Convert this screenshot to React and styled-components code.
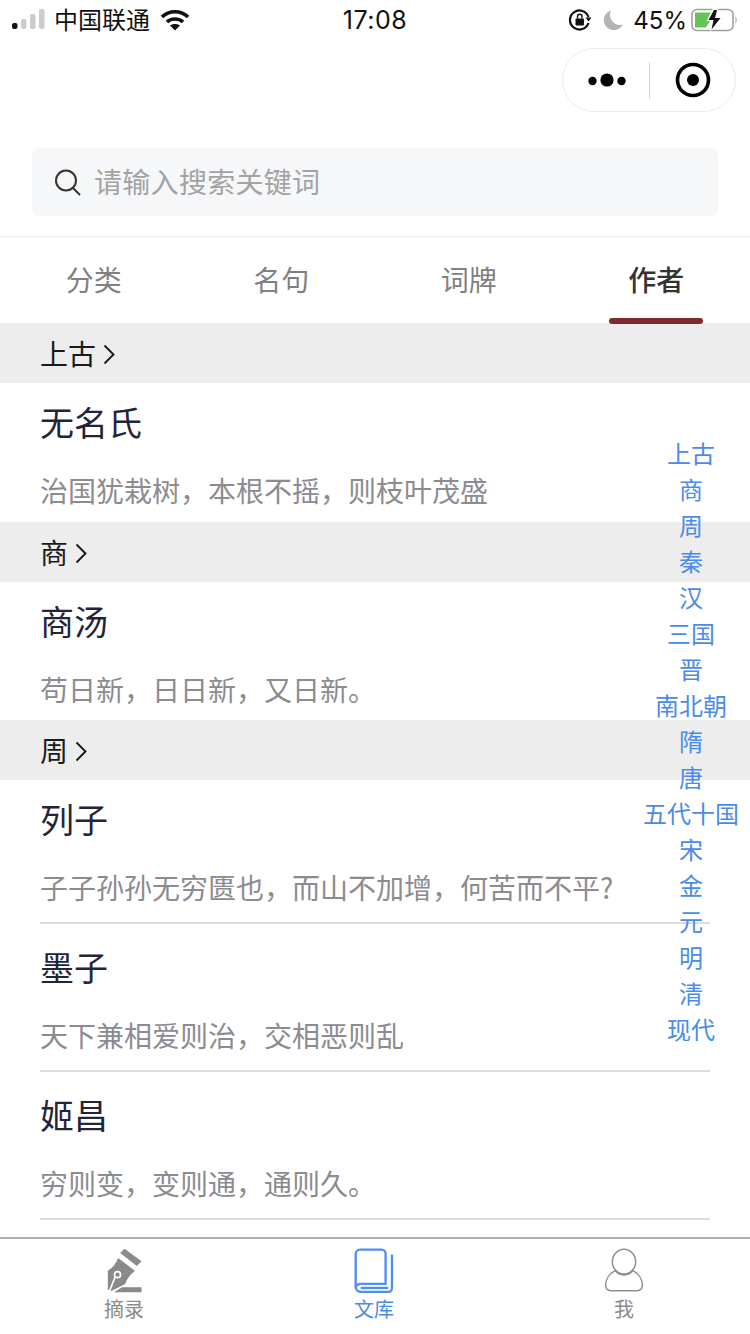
import React from "react";
import styled, { createGlobalStyle } from "styled-components";

const Global = createGlobalStyle`
  html, body { margin: 0; padding: 0; background: #fff; }
  body { font-family: "Inter", "Noto Sans CJK SC", sans-serif; }
  * { box-sizing: border-box; }
`;

const CJK = `"Noto Sans CJK SC", "Noto Sans", sans-serif`;

const Page = styled.div`
  position: relative;
  width: 750px;
  height: 1334px;
  display: flex;
  flex-direction: column;
  overflow: hidden;
  background: #fff;
  font-family: ${CJK};
`;

const StatusBar = styled.div`
  height: 40px;
  display: grid;
  grid-template-columns: 1fr auto 1fr;
  align-items: center;
  padding: 0 12px;
  color: #111;
  font-size: 24px;
`;
const StatusLeft = styled.div`
  display: flex;
  align-items: center;
`;
const Carrier = styled.span`
  margin-left: 9px;
  font-size: 24px;
  line-height: 38px;
  height: 40px;
`;
const WifiWrap = styled.span`
  display: flex;
  margin-left: 10px;
`;
const Clock = styled.div`
  font-family: "Inter", sans-serif;
  font-size: 25px;
  letter-spacing: 0.5px;
  line-height: 40px;
`;
const StatusRight = styled.div`
  display: flex;
  align-items: center;
  justify-content: flex-end;
`;
const Percent = styled.span`
  font-family: "Inter", sans-serif;
  font-size: 24px;
  margin: 0 4px 0 10px;
`;
const MoonWrap = styled.span`
  display: flex;
  margin-left: 11px;
`;

const NavRow = styled.div`
  height: 72px;
  padding: 8px 14px 0 0;
  display: flex;
  justify-content: flex-end;
`;
const Capsule = styled.div`
  width: 174px;
  height: 64px;
  border: 1px solid #ececec;
  border-radius: 32px;
  display: grid;
  grid-template-columns: 86px 1px 1fr;
  align-items: center;
  justify-items: center;
`;
const CapsuleRule = styled.div`
  width: 1px;
  height: 37px;
  background: #d8d8d8;
`;

const SearchWrap = styled.div`
  padding: 36px 32px 20px;
  border-bottom: 1px solid #ececec;
`;
const SearchBox = styled.div`
  height: 68px;
  border-radius: 6px;
  background: #f6f7f9;
  display: flex;
  align-items: center;
  padding-left: 22px;
  gap: 12px;
`;
const Placeholder = styled.span`
  font-size: 28px;
  letter-spacing: 0.3px;
  color: #a3a3a3;
  line-height: 66px;
  height: 68px;
`;

const Tabs = styled.div`
  height: 86px;
  display: grid;
  grid-template-columns: repeat(4, 1fr);
`;
const Tab = styled.div`
  position: relative;
  display: flex;
  align-items: center;
  justify-content: center;
  padding-bottom: 2px;
  font-size: 28px;
  color: ${(p) => (p.$active ? "#333" : "#808080")};
  font-weight: ${(p) => (p.$active ? 500 : 400)};
`;
const Indicator = styled.span`
  position: absolute;
  left: 46px;
  bottom: -1px;
  width: 94px;
  height: 6px;
  border-radius: 3px;
  background: #7f2a30;
  z-index: 1;
`;

const List = styled.div`
  flex: 1;
  overflow: hidden;
`;
const SectionHead = styled.div`
  height: 60px;
  background: #ededed;
  display: flex;
  align-items: center;
  padding-left: 40px;
  gap: 7px;
  font-size: 28px;
  color: #1a1a1a;
`;
const ChevronWrap = styled.span`
  display: flex;
  margin-top: 4px;
`;
const Item = styled.div`
  margin: 0 40px;
  width: 670px;
  height: ${(p) => (p.$first ? (p.$rule ? "143.6px" : "138.6px") : "148px")};
  padding-top: ${(p) => (p.$first ? 0 : "4px")};
  border-bottom: ${(p) => (p.$rule ? "2px solid #dedede" : "none")};
`;
const Name = styled.div`
  height: 80px;
  line-height: 78px;
  font-size: 34px;
  color: #23243a;
`;
const Quote = styled.div`
  height: 54px;
  line-height: 54px;
  font-size: 28px;
  color: #8b8b90;
  white-space: nowrap;
`;

const IndexBar = styled.div`
  position: absolute;
  top: 435px;
  right: 11px;
  width: 96px;
  display: flex;
  flex-direction: column;
  align-items: center;
  font-size: 24px;
  line-height: 36px;
  color: #4a8bea;
  white-space: nowrap;
`;

const TabBar = styled.div`
  height: 97px;
  border-top: 2px solid #b0b0b0;
  display: grid;
  grid-template-columns: repeat(3, 1fr);
  background: #fff;
`;
const BarItem = styled.div`
  display: flex;
  flex-direction: column;
  align-items: center;
  padding: 8px 2px 0 0;
  font-size: 20px;
  line-height: 26px;
  color: ${(p) => (p.$active ? "#4a8bea" : "#8a8a8a")};
`;
const BarIcon = styled.div`
  height: 46px;
  margin-bottom: 3px;
  display: flex;
  align-items: center;
`;

const Signal = () => (
  <svg width="33" height="22" viewBox="0 0 33 22">
    <rect x="0" y="14" width="5.5" height="6" rx="2" fill="#111" />
    <rect x="9" y="10" width="5.5" height="10" rx="2" fill="#ccc" />
    <rect x="18" y="5" width="5.5" height="15" rx="2" fill="#ccc" />
    <rect x="27" y="0" width="5.5" height="20" rx="2" fill="#ccc" />
  </svg>
);
const Wifi = () => (
  <svg width="30" height="22" viewBox="0 0 30 22" fill="none" stroke="#111" strokeWidth="3.6">
    <path d="M2 8 C9 1 21 1 28 8" />
    <path d="M7 13 C11 9 19 9 23 13" />
    <path d="M15 21.5 L10 16.5 C13 14.5 17 14.5 20 16.5 Z" fill="#111" stroke="none" />
  </svg>
);
const RotationLock = () => (
  <svg width="24" height="24" viewBox="0 0 24 24" fill="none">
    <path d="M20.5 9 A9.5 9.5 0 1 0 20.5 15" stroke="#111" strokeWidth="2.2" />
    <path d="M17.5 9.5 L23.5 9.5 L20.5 13.5 Z" fill="#111" />
    <rect x="7.5" y="10.5" width="8.5" height="7" rx="1" fill="#111" />
    <path d="M9.5 10.5 V8.5 A2.2 2.2 0 0 1 14 8.5 V10.5" stroke="#111" strokeWidth="1.4" />
  </svg>
);
const Moon = () => (
  <svg width="20" height="21" viewBox="0 0 20 21">
    <path d="M8 0.5 A10 10 0 1 0 19.8 14.5 A10 10 0 0 1 8 0.5 Z" fill="#b4b4b4" />
  </svg>
);
const Battery = () => (
  <svg width="47" height="24" viewBox="0 0 47 24" fill="none">
    <rect x="1" y="1.5" width="41" height="21" rx="5" stroke="#a0a0a0" strokeWidth="1.6" />
    <path d="M4 4.5 H24 L15 19.5 H4 Z" fill="#62c554" />
    <path d="M44.5 8.5 C46 9.5 46 14.5 44.5 15.5 Z" fill="#a0a0a0" />
    <path d="M22 0 L27 0 L25 9 H31 L19 24 L21.5 13 H15.5 Z" fill="#fff" />
    <path d="M23 2 L26 2 L24 10 H29.5 L20.5 21.5 L22.5 12 H17.5 Z" fill="#111" />
  </svg>
);
const Dots = () => (
  <svg width="40" height="16" viewBox="-1.5 0 40 16">
    <circle cx="5" cy="9" r="4.2" fill="#000" />
    <circle cx="19.5" cy="8" r="6.6" fill="#000" />
    <circle cx="34" cy="9" r="4.2" fill="#000" />
  </svg>
);
const Target = () => (
  <svg width="36" height="36" viewBox="0 0 36 36">
    <circle cx="18" cy="18" r="15.5" fill="none" stroke="#000" strokeWidth="3.6" />
    <circle cx="18" cy="18" r="6" fill="#000" />
  </svg>
);
const SearchIcon = () => (
  <svg width="28" height="28" viewBox="0 0 28 28" fill="none" stroke="#333" strokeWidth="2">
    <circle cx="12" cy="12.5" r="10" />
    <path d="M19 20 L26 27" />
  </svg>
);
const Chevron = () => (
  <svg width="12" height="22" viewBox="0 0 12 22" fill="none" stroke="#1a1a1a" strokeWidth="1.9">
    <path d="M1.5 1.5 L10.5 10.5 L1.5 19.5" />
  </svg>
);
const PenIcon = () => (
  <svg width="37" height="46" viewBox="80 35 110 138">
    <path d="M122 53 L135 40 L186 78 L172 92 Z" fill="#8a8a8a" />
    <path fill="#8a8a8a"
      d="M116 68 L166 106 C152 118 142 130 137 146 L96 167 L85 163 L85 106 C100 98 110 84 116 68 Z" />
    <circle cx="114" cy="118" r="9" fill="#8a8a8a" stroke="#fff" strokeWidth="5" />
    <path d="M106 127 L90 167" stroke="#fff" strokeWidth="5" />
    <path d="M128 156 H186 V171 H103 Z" fill="#8a8a8a" />
  </svg>
);
const BookIcon = () => (
  <svg width="41" height="45" viewBox="70 33 122 134" fill="none" stroke="#4f8ff0" strokeWidth="7">
    <path d="M88 38 H152 A12 12 0 0 1 164 50 V140 H90 A15 15 0 0 0 75 150 V51 A13 13 0 0 1 88 38 Z" />
    <path d="M75 148 C75 157 82 164 92 164 H172 A11 11 0 0 0 183 153 V52" />
    <path d="M90 152 H172" />
  </svg>
);
const PersonIcon = () => (
  <svg width="40" height="44" viewBox="72 35 118 132" fill="none" stroke="#8e8e8e" strokeWidth="4.5">
    <ellipse cx="131" cy="76" rx="35" ry="37" />
    <path d="M105 103 C88 111 76 128 76 147 C76 157 82 163 92 163 H170 C180 163 186 157 186 147 C186 128 174 111 157 103 C150 113 141 116 131 116 C121 116 112 113 105 103 Z" />
  </svg>
);

const sections = [
  { title: "上古", items: [{ name: "无名氏", quote: "治国犹栽树，本根不摇，则枝叶茂盛" }] },
  { title: "商", items: [{ name: "商汤", quote: "苟日新，日日新，又日新。" }] },
  {
    title: "周",
    rule: true,
    items: [
      { name: "列子", quote: "子子孙孙无穷匮也，而山不加增，何苦而不平?" },
      { name: "墨子", quote: "天下兼相爱则治，交相恶则乱" },
      { name: "姬昌", quote: "穷则变，变则通，通则久。" },
    ],
  },
];
const dynasties = ["上古", "商", "周", "秦", "汉", "三国", "晋", "南北朝", "隋", "唐", "五代十国", "宋", "金", "元", "明", "清", "现代"];
const tabs = ["分类", "名句", "词牌", "作者"];

export default function App() {
  return (
    <Page>
      <Global />
      <StatusBar>
        <StatusLeft>
          <Signal />
          <Carrier>中国联通</Carrier>
          <WifiWrap><Wifi /></WifiWrap>
        </StatusLeft>
        <Clock>17:08</Clock>
        <StatusRight>
          <RotationLock />
          <MoonWrap><Moon /></MoonWrap>
          <Percent>45%</Percent>
          <Battery />
        </StatusRight>
      </StatusBar>
      <NavRow>
        <Capsule>
          <Dots />
          <CapsuleRule />
          <Target />
        </Capsule>
      </NavRow>
      <SearchWrap>
        <SearchBox>
          <SearchIcon />
          <Placeholder>请输入搜索关键词</Placeholder>
        </SearchBox>
      </SearchWrap>
      <Tabs>
        {tabs.map((t, i) => (
          <Tab key={t} $active={i === 3}>
            {t}
            {i === 3 && <Indicator />}
          </Tab>
        ))}
      </Tabs>
      <List>
        {sections.map((s) => (
          <div key={s.title}>
            <SectionHead>
              {s.title}
              <ChevronWrap><Chevron /></ChevronWrap>
            </SectionHead>
            {s.items.map((it, i) => (
              <Item key={it.name} $first={i === 0} $rule={s.rule}>
                <Name>{it.name}</Name>
                <Quote>{it.quote}</Quote>
              </Item>
            ))}
          </div>
        ))}
      </List>
      <IndexBar>
        {dynasties.map((d) => (
          <span key={d}>{d}</span>
        ))}
      </IndexBar>
      <TabBar>
        <BarItem>
          <BarIcon><PenIcon /></BarIcon>
          摘录
        </BarItem>
        <BarItem $active>
          <BarIcon><BookIcon /></BarIcon>
          文库
        </BarItem>
        <BarItem>
          <BarIcon><PersonIcon /></BarIcon>
          我
        </BarItem>
      </TabBar>
    </Page>
  );
}
